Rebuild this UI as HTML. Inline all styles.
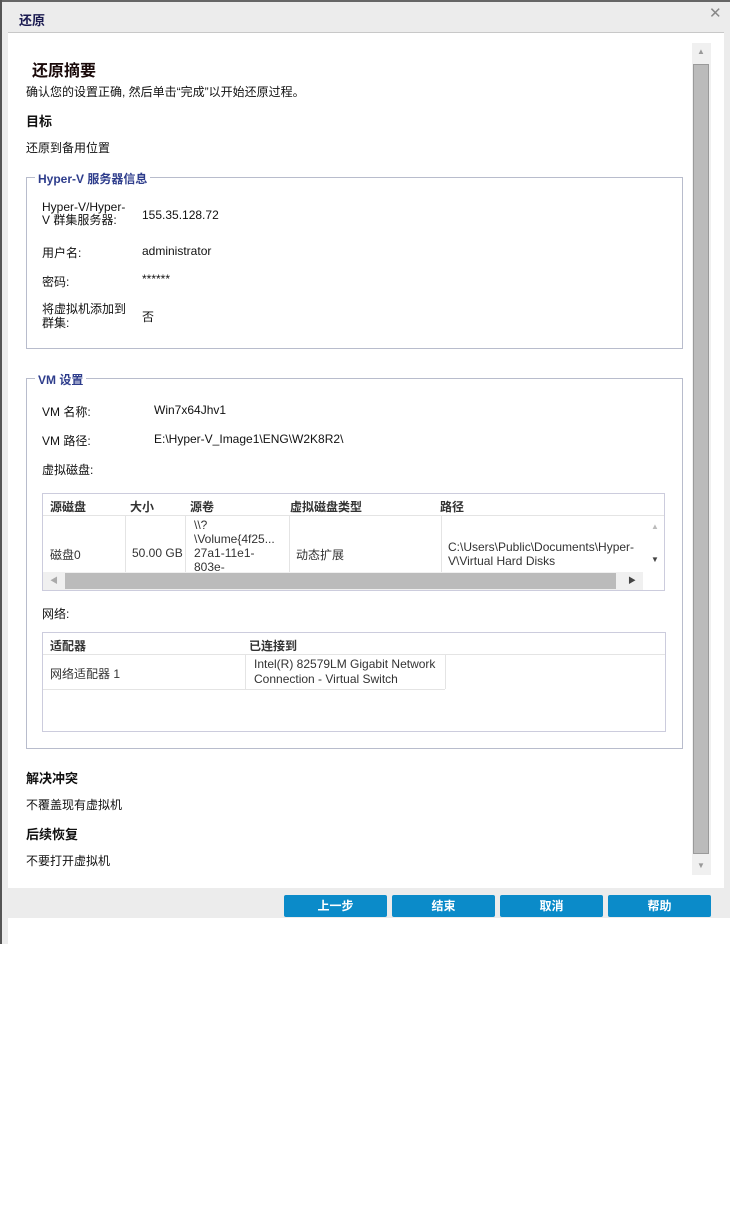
<!DOCTYPE html>
<html><head><meta charset="utf-8"><style>
body{margin:0;width:730px;height:1216px;background:#fff;position:relative;overflow:hidden;font-family:"Liberation Sans","Noto Sans CJK SC",sans-serif;font-size:12px;color:#111}
.a{position:absolute}
.t{position:absolute;white-space:nowrap}
.b{font-weight:bold}
fieldset{position:absolute;border:1px solid #b8bccc;margin:0;padding:0}
.lg{position:absolute;top:-8px;left:8px;background:#fff;padding:0 3px;color:#2e3d8c;font-weight:bold;font-size:12px}
.btn{position:absolute;top:895px;width:103px;height:22px;background:#0b8bc9;color:#fff;font-weight:bold;text-align:center;line-height:22px;font-size:12px;border-radius:2px}
.g{color:#333}
</style></head><body>
<div class="a" style="left:0;top:0;width:730px;height:944px;background:#ececec"></div>
<div class="a" style="left:0;top:0;width:730px;height:2px;background:#666"></div>
<div class="a" style="left:0;top:0;width:2px;height:944px;background:#555"></div>
<div class="a" style="left:8px;top:32px;width:716px;height:1px;background:#c8c8c8"></div>
<div class="a" style="left:8px;top:33px;width:716px;height:855px;background:#fff"></div>
<div class="a" style="left:8px;top:918px;width:722px;height:26px;background:#fff"></div>
<div class="t b" style="left:19px;top:10px;font-size:13px;color:#1a1a50">还原</div>
<div class="t" style="left:709px;top:4px;font-size:15px;color:#888">✕</div>
<!-- scrollbar -->
<div class="a" style="left:692px;top:43px;width:19px;height:832px;background:#f0f0f0"></div>
<div class="a" style="left:693px;top:64px;width:16px;height:790px;background:#bbb;border:1px solid #9a9a9a;box-sizing:border-box"></div>
<div class="t" style="left:697px;top:47px;font-size:8px;color:#999">▲</div>
<div class="t" style="left:697px;top:861px;font-size:8px;color:#999">▼</div>

<div class="t b" style="left:32px;top:57px;font-size:16px;color:#1a0a0a">还原摘要</div>
<div class="t" style="left:26px;top:83px">确认您的设置正确, 然后单击“完成”以开始还原过程。</div>
<div class="t b" style="left:26px;top:111px;font-size:13px">目标</div>
<div class="t" style="left:26px;top:139px">还原到备用位置</div>

<fieldset style="left:26px;top:177px;width:655px;height:170px"><div class="lg">Hyper-V 服务器信息</div></fieldset>
<div class="a" style="left:42px;top:201px;line-height:13px">Hyper-V/Hyper-<br>V 群集服务器:</div>
<div class="t" style="left:142px;top:208px">155.35.128.72</div>
<div class="t" style="left:42px;top:244px">用户名:</div>
<div class="t" style="left:142px;top:244px">administrator</div>
<div class="t" style="left:42px;top:273px">密码:</div>
<div class="t" style="left:142px;top:272px">******</div>
<div class="a" style="left:42px;top:302px;line-height:14px">将虚拟机添加到<br>群集:</div>
<div class="t" style="left:142px;top:308px">否</div>

<fieldset style="left:26px;top:378px;width:655px;height:369px"><div class="lg">VM 设置</div></fieldset>
<div class="t" style="left:42px;top:403px">VM 名称:</div>
<div class="t" style="left:154px;top:403px">Win7x64Jhv1</div>
<div class="t" style="left:42px;top:432px">VM 路径:</div>
<div class="t" style="left:154px;top:432px">E:\Hyper-V_Image1\ENG\W2K8R2\</div>
<div class="t" style="left:42px;top:461px">虚拟磁盘:</div>

<div class="a" style="left:42px;top:493px;width:623px;height:98px;border:1px solid #ccd;box-sizing:border-box;overflow:hidden">
 <div class="a" style="left:0;top:21px;width:621px;height:1px;background:#e4e4e4"></div>
 <div class="t b g" style="left:7px;top:4px">源磁盘</div>
 <div class="t b g" style="left:87px;top:4px">大小</div>
 <div class="t b g" style="left:147px;top:4px">源卷</div>
 <div class="t b g" style="left:247px;top:4px">虚拟磁盘类型</div>
 <div class="t b g" style="left:397px;top:4px">路径</div>
 <div class="a" style="left:82px;top:22px;width:1px;height:56px;background:#e4e4e4"></div>
 <div class="a" style="left:142px;top:22px;width:1px;height:56px;background:#e4e4e4"></div>
 <div class="a" style="left:246px;top:22px;width:1px;height:56px;background:#e4e4e4"></div>
 <div class="a" style="left:398px;top:22px;width:1px;height:56px;background:#e4e4e4"></div>
 <div class="t g" style="left:7px;top:52px">磁盘0</div>
 <div class="t g" style="left:89px;top:52px">50.00 GB</div>
 <div class="a g" style="left:151px;top:24px;line-height:14px">\\?<br>\Volume{4f25...<br>27a1-11e1-<br>803e-</div>
 <div class="t g" style="left:253px;top:52px">动态扩展</div>
 <div class="a g" style="left:405px;top:46px;line-height:14px">C:\Users\Public\Documents\Hyper-<br>V\Virtual Hard Disks</div>
 <div class="a" style="left:0;top:78px;width:621px;height:18px;background:#fff"></div>
 <div class="a" style="left:0;top:78px;width:600px;height:18px;background:#f0f0f0"></div>
 <div class="a" style="left:22px;top:79px;width:551px;height:16px;background:#bbb"></div>
 <div class="t" style="left:7px;top:81px;font-size:8px;color:#aaa">◀</div>
 <div class="t" style="left:585px;top:81px;font-size:8px;color:#444">▶</div>
 <div class="t" style="left:608px;top:28px;font-size:8px;color:#bbb">▲</div>
 <div class="t" style="left:608px;top:61px;font-size:8px;color:#444">▼</div>
</div>

<div class="t" style="left:42px;top:605px">网络:</div>
<div class="a" style="left:42px;top:632px;width:624px;height:100px;border:1px solid #ccd;box-sizing:border-box">
 <div class="a" style="left:0;top:21px;width:622px;height:1px;background:#e4e4e4"></div>
 <div class="t b g" style="left:7px;top:4px">适配器</div>
 <div class="t b g" style="left:206px;top:4px">已连接到</div>
 <div class="a" style="left:0;top:56px;width:402px;height:1px;background:#e4e4e4"></div>
 <div class="a" style="left:202px;top:22px;width:1px;height:34px;background:#e4e4e4"></div>
 <div class="a" style="left:402px;top:22px;width:1px;height:34px;background:#e4e4e4"></div>
 <div class="t g" style="left:7px;top:32px">网络适配器 1</div>
 <div class="a g" style="left:211px;top:24px;line-height:15px">Intel(R) 82579LM Gigabit Network<br>Connection - Virtual Switch</div>
</div>

<div class="t b" style="left:26px;top:768px;font-size:13px">解决冲突</div>
<div class="t" style="left:26px;top:796px">不覆盖现有虚拟机</div>
<div class="t b" style="left:26px;top:824px;font-size:13px">后续恢复</div>
<div class="t" style="left:26px;top:852px">不要打开虚拟机</div>

<div class="btn" style="left:284px">上一步</div>
<div class="btn" style="left:392px">结束</div>
<div class="btn" style="left:500px">取消</div>
<div class="btn" style="left:608px">帮助</div>
</body></html>
